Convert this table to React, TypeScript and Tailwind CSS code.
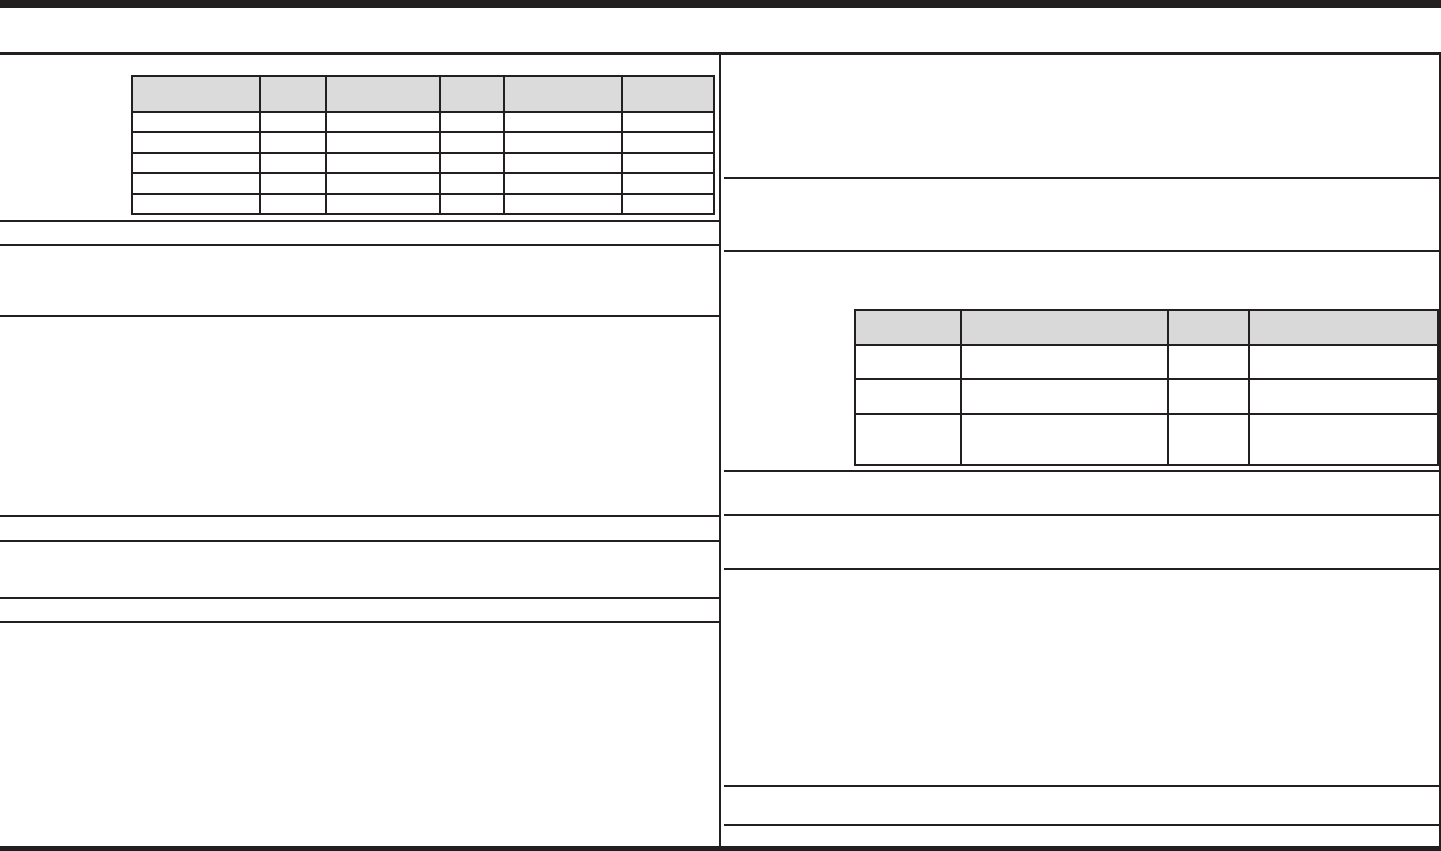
const line = "border-[#231f20]";

function LeftTable() {
  const widths = ["w-[128px]", "w-[66px]", "w-[114px]", "w-[64px]", "w-[118px]", "w-[92px]"];
  const rows = ["h-[20px]", "h-[21px]", "h-[20px]", "h-[21px]", "h-[20px]"];
  return (
    <table className="w-[582px] table-fixed border-collapse">
      <thead>
        <tr className="h-[36px] bg-[#dbdbdb]">
          {widths.map((w, i) => (
            <th key={i} className={`${w} border-2 ${line}`} />
          ))}
        </tr>
      </thead>
      <tbody>
        {rows.map((h, r) => (
          <tr key={r} className={h}>
            {widths.map((_, i) => (
              <td key={i} className={`border-2 ${line}`} />
            ))}
          </tr>
        ))}
      </tbody>
    </table>
  );
}

function RightTable() {
  const widths = ["w-[106px]", "w-[207px]", "w-[81px]", "w-[189px]"];
  const rows = ["h-[34px]", "h-[35px]", "h-[51px]"];
  return (
    <table className="w-[584px] table-fixed border-collapse">
      <thead>
        <tr className="h-[35px] bg-[#d9d9d9]">
          {widths.map((w, i) => (
            <th key={i} className={`${w} border-2 ${line}`} />
          ))}
        </tr>
      </thead>
      <tbody>
        {rows.map((h, r) => (
          <tr key={r} className={h}>
            {widths.map((_, i) => (
              <td key={i} className={`border-2 ${line}`} />
            ))}
          </tr>
        ))}
      </tbody>
    </table>
  );
}

export default function App() {
  return (
    <div className="flex h-[851px] w-[1441px] flex-col overflow-hidden bg-white font-['Liberation_Sans',sans-serif]">
      <div className="h-[8px] bg-[#231f20]" />
      <div className="h-[44px]" />
      <div className="h-[3px] bg-[#231f20]" />

      <div className="flex min-h-0 flex-1">
        {/* left column */}
        <div className={`flex w-[722px] flex-col border-r-2 ${line}`}>
          <div className={`h-[167px] border-b-2 ${line} pl-[131px] pt-[20px]`}>
            <LeftTable />
          </div>
          <div className={`h-[24px] border-b-2 ${line}`} />
          <div className={`h-[71px] border-b-2 ${line}`} />
          <div className={`h-[200px] border-b-2 ${line}`} />
          <div className={`h-[25px] border-b-2 ${line}`} />
          <div className={`h-[57px] border-b-2 ${line}`} />
          <div className={`h-[24px] border-b-2 ${line}`} />
          <div className="flex-1" />
        </div>

        {/* right column */}
        <div className="flex flex-1 flex-col pl-[3px]">
          <div className={`flex flex-1 flex-col border-r-2 ${line}`}>
            <div className={`h-[124px] border-b-2 ${line}`} />
            <div className={`h-[73px] border-b-2 ${line}`} />
            <div className={`h-[220px] border-b-2 ${line} pl-[130px] pt-[57px]`}>
              <RightTable />
            </div>
            <div className={`h-[44px] border-b-2 ${line}`} />
            <div className={`h-[54px] border-b-2 ${line}`} />
            <div className={`h-[217px] border-b-2 ${line}`} />
            <div className={`h-[39px] border-b-2 ${line}`} />
            <div className="flex-1" />
          </div>
        </div>
      </div>

      <div className="h-[5px] bg-[#231f20]" />
    </div>
  );
}
